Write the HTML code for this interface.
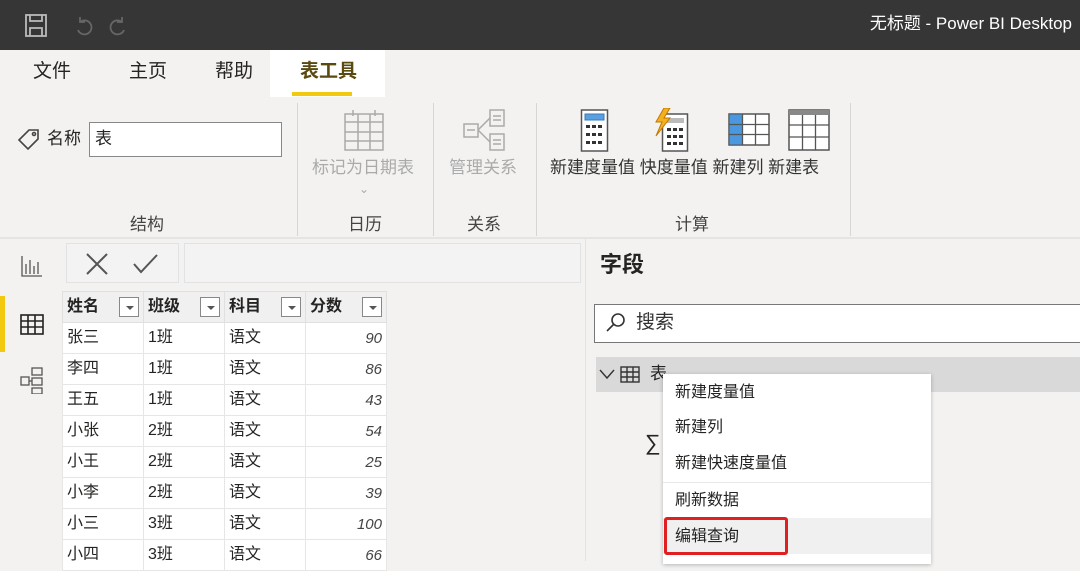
<!DOCTYPE html>
<html><head><meta charset="utf-8"><style>
*{margin:0;padding:0;box-sizing:border-box}
body{width:1080px;height:561px;overflow:hidden;background:#f3f2f1;font-family:"Liberation Sans","Noto Sans CJK SC",sans-serif;color:#252423;position:relative}
.a{position:absolute;white-space:nowrap;line-height:1.2}
.sep{position:absolute;width:1px;background:#d6d6d6}
td{border:1px solid #e6e6e6;height:31px;font-size:16px;padding:0 4px;background:#fff;line-height:1;vertical-align:middle}
th{border:1px solid #e0e0e0;height:31px;font-size:16px;padding:0 4px;text-align:left;background:#f0f0f0;font-weight:bold;position:relative;line-height:1}
.dd{position:absolute;right:4px;top:5px;width:20px;height:20px;border:1px solid #888;background:#fff}
.dd:after{content:"";position:absolute;left:6px;top:8px;border:4px solid transparent;border-top:4px solid #555}
.num{text-align:right;font-style:italic;font-size:15px;color:#444}
.mi{position:absolute;left:12px;font-size:16px;line-height:1.2}
</style></head><body>
<div class="a" style="left:0;top:0;width:1080px;height:50px;background:#363636"></div>
<svg class="a" style="left:24px;top:13px" width="110" height="26" fill="none" stroke="#bbb" stroke-width="1.8">
<rect x="2" y="2" width="20" height="21"/><path d="M6 2v6h12V2M6 23v-8h12v8"/>
<path d="M56 9a7 7 0 1 1-2 8M56 4v5h5" stroke="#666"/><path d="M98 9a7 7 0 1 0 2 8M98 4v5h-5" stroke="#666"/></svg>
<div class="a" style="right:8px;top:14px;color:#fff;font-size:17px">无标题 - Power BI Desktop</div>
<div class="a" style="left:270px;top:50px;width:115px;height:47px;background:#fff"></div>
<div class="a" style="left:33px;top:61px;font-size:19px">文件</div>
<div class="a" style="left:129px;top:61px;font-size:19px">主页</div>
<div class="a" style="left:215px;top:61px;font-size:19px">帮助</div>
<div class="a" style="left:300px;top:61px;font-size:19px;font-weight:bold;color:#5a4a10">表工具</div>
<div class="a" style="left:292px;top:92px;width:60px;height:4px;background:#f2c811"></div>
<svg class="a" style="left:17px;top:128px" width="26" height="24" fill="none" stroke="#444" stroke-width="1.6"><path d="M2 12l10-10h9v9L11 21z"/><circle cx="17" cy="6" r="1.5"/></svg>
<div class="a" style="left:47px;top:129px;font-size:17px">名称</div>
<div class="a" style="left:89px;top:122px;width:193px;height:35px;background:#fff;border:1px solid #888;font-size:17px;padding:6px 5px">表</div>
<div class="a" style="left:130px;top:215px;font-size:17px;color:#444">结构</div>
<div class="sep" style="left:297px;top:103px;height:133px"></div>
<svg class="a" style="left:343px;top:108px" width="44" height="45" fill="none" stroke="#aaa" stroke-width="1.5"><rect x="2" y="6" width="38" height="36"/><path d="M2 14h38M2 24h38M2 33h38M15 6v36M27 6v36M10 2v6M32 2v6"/></svg>
<div class="a" style="left:312px;top:158px;font-size:17px;color:#aaa">标记为日期表</div>
<div class="a" style="left:359px;top:182px;font-size:12px;color:#aaa">⌄</div>
<div class="a" style="left:348px;top:215px;font-size:17px;color:#444">日历</div>
<div class="sep" style="left:433px;top:103px;height:133px"></div>
<svg class="a" style="left:462px;top:108px" width="46" height="45" fill="none" stroke="#aaa" stroke-width="1.5"><rect x="2" y="16" width="14" height="13"/><rect x="28" y="2" width="14" height="16"/><rect x="28" y="26" width="14" height="16"/><path d="M16 22l12-12M16 22l12 12M5 22h8M31 8h8M31 12h8M31 32h8M31 36h8"/></svg>
<div class="a" style="left:449px;top:158px;font-size:17px;color:#aaa">管理关系</div>
<div class="a" style="left:467px;top:215px;font-size:17px;color:#444">关系</div>
<div class="sep" style="left:536px;top:103px;height:133px"></div>
<svg class="a" style="left:578px;top:108px" width="260" height="46">
<rect x="3.5" y="2" width="26" height="41" fill="#fff" stroke="#555" stroke-width="1.5"/><rect x="7" y="6" width="19" height="6" fill="#5aa0e0" stroke="#3a78b8"/>
<g fill="#333"><rect x="8" y="17" width="4" height="3"/><rect x="14" y="17" width="4" height="3"/><rect x="20" y="17" width="4" height="3"/><rect x="8" y="25" width="4" height="3"/><rect x="14" y="25" width="4" height="3"/><rect x="20" y="25" width="4" height="3"/><rect x="8" y="33" width="4" height="3"/><rect x="14" y="33" width="4" height="3"/><rect x="20" y="33" width="4" height="3"/></g>
<rect x="84.5" y="6" width="25" height="37" fill="#fff" stroke="#555" stroke-width="1.5"/><rect x="88" y="10" width="18" height="5" fill="#bbb"/>
<g fill="#333"><rect x="89" y="20" width="4" height="3"/><rect x="95" y="20" width="4" height="3"/><rect x="101" y="20" width="4" height="3"/><rect x="89" y="27" width="4" height="3"/><rect x="95" y="27" width="4" height="3"/><rect x="101" y="27" width="4" height="3"/><rect x="89" y="34" width="4" height="3"/><rect x="95" y="34" width="4" height="3"/><rect x="101" y="34" width="4" height="3"/></g>
<path d="M86 0l-8 14h6l-6 14 14-18h-6l6-10z" fill="#f5b020" stroke="#c07800"/>
<rect x="151" y="6" width="40" height="31" fill="#fff" stroke="#555" stroke-width="1.5"/><rect x="151.5" y="6.5" width="13" height="30" fill="#4a98e0"/><path d="M151 16.5h40M151 26.5h40M164.5 6v31M177.5 6v31" stroke="#555" stroke-width="1.3"/>
<rect x="211" y="2" width="40" height="40" fill="#fff" stroke="#555" stroke-width="1.5"/><rect x="211" y="2" width="40" height="5" fill="#888"/><path d="M211 17h40M211 29h40M224.5 7v35M237.5 7v35" stroke="#555" stroke-width="1.3"/></svg>
<div class="a" style="left:550px;top:158px;font-size:17px;color:#333">新建度量值 快度量值 新建列 新建表</div>
<div class="a" style="left:675px;top:215px;font-size:17px;color:#444">计算</div>
<div class="sep" style="left:850px;top:103px;height:133px"></div>
<div class="a" style="left:0;top:237px;width:1080px;height:2px;background:#e4e4e4"></div>
<svg class="a" style="left:20px;top:254px" width="24" height="140" fill="none" stroke="#555" stroke-width="1.3">
<path d="M2 2v20h20M6 20V10M10 20V6M14 20V12M18 20V8"/>
<rect x="1" y="61" width="22" height="19" stroke="#222" stroke-width="1.6"/><path d="M1 67h22M1 73h22M8 61v19M15 61v19" stroke="#222" stroke-width="1.6"/>
<rect x="1" y="123" width="8" height="8"/><rect x="12" y="114" width="10" height="7"/><rect x="12" y="124" width="10" height="7"/><rect x="12" y="134" width="10" height="6"/><path d="M9 127h3"/></svg>
<div class="a" style="left:0;top:296px;width:5px;height:56px;background:#f2c811"></div>
<div class="a" style="left:66px;top:243px;width:113px;height:40px;background:#f3f3f3;border:1px solid #e2e2e2"></div>
<div class="a" style="left:184px;top:243px;width:397px;height:40px;background:#f3f3f3;border:1px solid #e2e2e2"></div>
<svg class="a" style="left:84px;top:251px" width="80" height="26" fill="none" stroke="#555" stroke-width="2"><path d="M3 3l20 20M23 3L3 23M50 13l7 8 16-17"/></svg>
<table class="a" style="left:62px;top:291px;border-collapse:collapse;width:325px;table-layout:fixed">
<tr><th>姓名<span class="dd"></span></th><th>班级<span class="dd"></span></th><th>科目<span class="dd"></span></th><th>分数<span class="dd"></span></th></tr>
<tr><td>张三</td><td>1班</td><td>语文</td><td class="num">90</td></tr>
<tr><td>李四</td><td>1班</td><td>语文</td><td class="num">86</td></tr>
<tr><td>王五</td><td>1班</td><td>语文</td><td class="num">43</td></tr>
<tr><td>小张</td><td>2班</td><td>语文</td><td class="num">54</td></tr>
<tr><td>小王</td><td>2班</td><td>语文</td><td class="num">25</td></tr>
<tr><td>小李</td><td>2班</td><td>语文</td><td class="num">39</td></tr>
<tr><td>小三</td><td>3班</td><td>语文</td><td class="num">100</td></tr>
<tr><td>小四</td><td>3班</td><td>语文</td><td class="num">66</td></tr>
</table>
<div class="a" style="left:585px;top:239px;width:1px;height:322px;background:#e2e2e2"></div>
<div class="a" style="left:600px;top:252px;font-size:22px;font-weight:bold">字段</div>
<div class="a" style="left:594px;top:304px;width:490px;height:39px;background:#fff;border:1px solid #777"></div>
<svg class="a" style="left:605px;top:312px" width="22" height="22" fill="none" stroke="#333" stroke-width="1.6"><circle cx="13" cy="8" r="6"/><path d="M9 12L2 19"/></svg>
<div class="a" style="left:636px;top:312px;font-size:19px;color:#333">搜索</div>
<div class="a" style="left:596px;top:357px;width:484px;height:35px;background:#d9d9d9"></div>
<svg class="a" style="left:599px;top:366px" width="42" height="18" fill="none" stroke="#333" stroke-width="1.4"><path d="M1 4l7 8 7-8"/><rect x="22" y="1" width="18" height="15"/><path d="M22 6h18M22 11h18M28 1v15M34 1v15"/></svg>
<div class="a" style="left:650px;top:364px;font-size:17px">表</div>
<div class="a" style="left:645px;top:430px;font-size:22px">∑</div>
<div class="a" style="left:663px;top:374px;width:268px;height:190px;background:#fff;box-shadow:0 1px 4px rgba(0,0,0,.25)">
<div class="mi" style="top:9px">新建度量值</div>
<div class="mi" style="top:44px">新建列</div>
<div class="mi" style="top:80px">新建快速度量值</div>
<div style="position:absolute;left:0;top:108px;width:268px;height:1px;background:#e8e8e8"></div>
<div class="mi" style="top:117px">刷新数据</div>
<div style="position:absolute;left:0;top:144px;width:268px;height:36px;background:#f0f0f0"></div>
<div class="mi" style="top:153px">编辑查询</div>
<div style="position:absolute;left:1px;top:143px;width:124px;height:38px;border:3px solid #e02020;border-radius:3px"></div>
</div>
</body></html>
